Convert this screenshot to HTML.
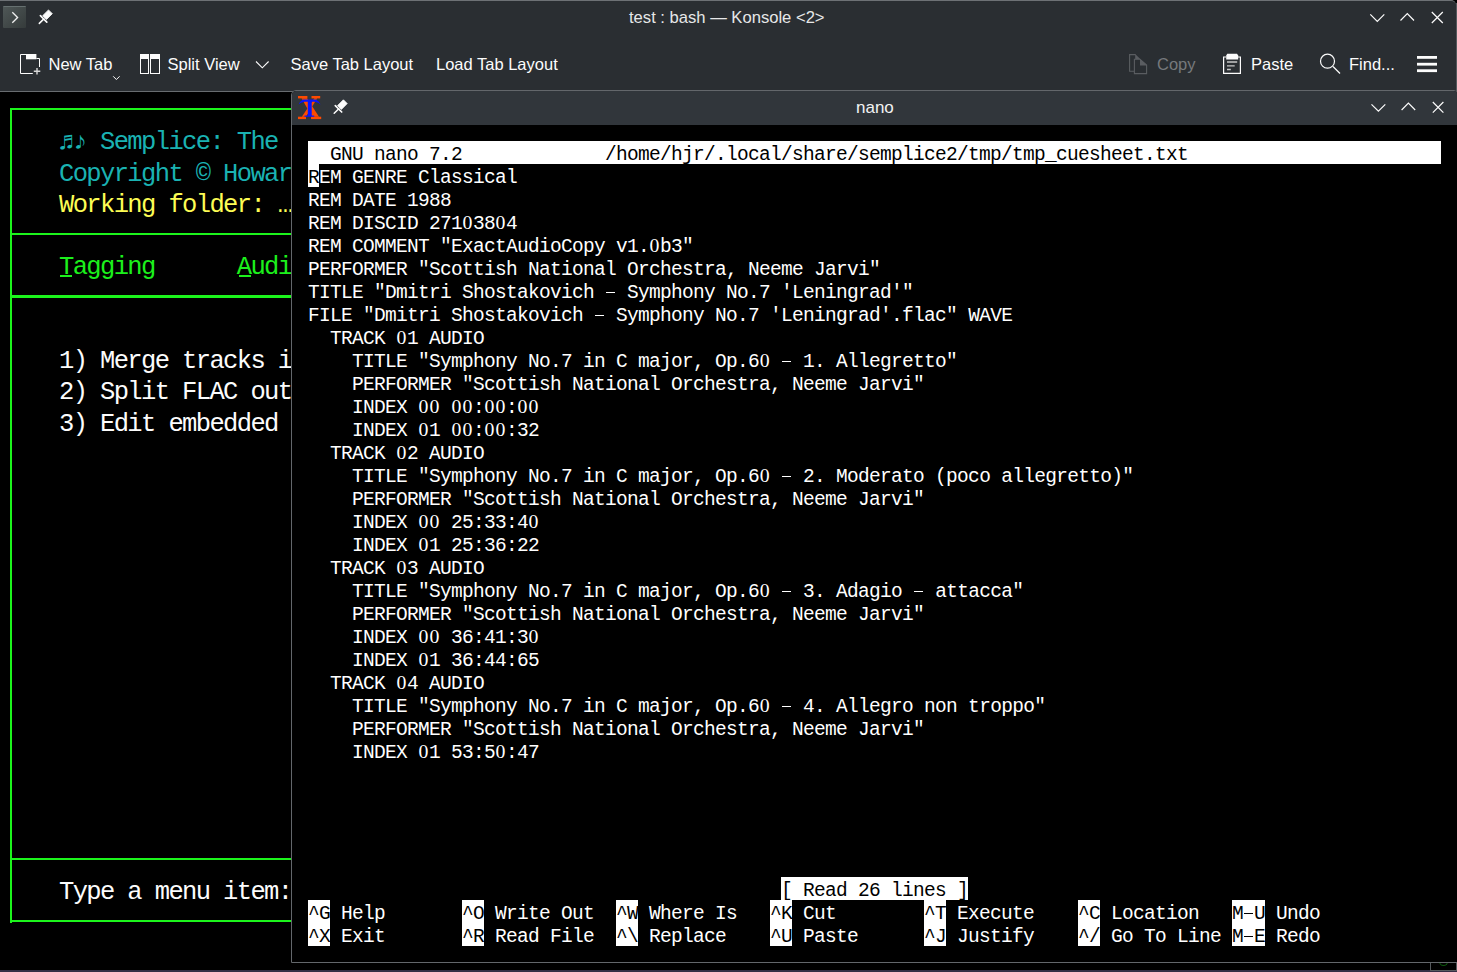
<!DOCTYPE html>
<html><head><meta charset="utf-8">
<style>
*{margin:0;padding:0;box-sizing:border-box}
html,body{width:1457px;height:972px;overflow:hidden;background:#000}
body{position:relative;font-family:"Liberation Sans",sans-serif}
.abs{position:absolute}
#desk{left:0;top:970px;width:1457px;height:2px;background:#352e45}
#ktitle{left:0;top:0;width:1456px;height:92px;background:#2a2e32;border-top:1px solid #6d7175;border-top-right-radius:5px;border-top-left-radius:0}
#ksep{left:0;top:91px;width:1457px;height:1px;background:#686c70}
.ttl{position:absolute;color:#fcfcfc;font-size:16px;white-space:pre;line-height:20px}
.tb{position:absolute;color:#fcfcfc;font-size:16.5px;white-space:pre;line-height:20px;top:54.4px}
.kl{position:absolute;font-family:"Liberation Mono",monospace;font-size:25.5px;letter-spacing:-1.63px;white-space:pre;line-height:31.25px;padding-top:3px}
.g{background:#1cf41c;position:absolute}
#nano{left:291px;top:90px;width:1167px;border-top-right-radius:4px;height:873px;border:1px solid #63676b;border-top-left-radius:5px;background:#000;overflow:hidden}
#ntitle{left:0;top:0;width:1170px;height:34px;background:#31363b}
.nl{position:absolute;height:23px;font-family:"Liberation Mono",monospace;font-size:19.5px;letter-spacing:-0.7px;line-height:23px;white-space:pre;color:#fff;padding-top:2.5px}
.rb{position:absolute;height:23px}
.hy{display:inline-block;width:9px;height:1.3px;margin:0 1px;background:currentColor;vertical-align:4.6px}
.z{font-family:"Liberation Serif",serif;display:inline-block;width:11px;text-align:center;letter-spacing:0;font-size:19.8px;line-height:12px}
svg{position:absolute;overflow:visible}
</style></head><body>
<div id="desk" class="abs"></div>
<div class="abs" style="left:1456px;top:3px;width:1px;height:967px;background:#55595d"></div>
<div class="abs" style="left:1430px;top:962px;width:27px;height:8.5px;border:1px solid #55595d;border-top:none"></div>
<div class="abs" style="left:1439px;top:960px;width:9px;height:6px;border:1.3px solid #0c5a0c;border-top:none;border-radius:0 0 5px 5px"></div>
<div id="ktitle" class="abs"></div>
<div id="ksep" class="abs"></div>
<!-- konsole title -->
<div class="ttl" style="left:629px;top:8.2px;font-size:16.6px;color:#e6e7e8">test : bash — Konsole &lt;2&gt;</div>
<div class="abs" style="left:3px;top:6px;width:23px;height:22px;background:linear-gradient(135deg,#4f5757,#353b3b);border-top:1px solid #667070;border-radius:1px"></div>
<svg style="left:0;top:0" width="1457" height="92" viewBox="0 0 1457 92">
 <g fill="none" stroke="#f0f0f0" stroke-width="1.3">
  <path d="M12.3 12.3 L17.6 17.5 L12.3 22.8"/>
 </g>
 <!-- pin -->
 <g fill="#fcfcfc" stroke="#fcfcfc" transform="translate(-294.9 -89.9)">
    <path d="M343.4 99.8 L347.2 103.6 L341.4 109.4 L337.6 105.6 Z" stroke-width="0.8" stroke-linejoin="round"/>
    <path d="M335.3 105.6 L341.7 112" stroke-width="1.7" stroke-linecap="round"/>
    <path d="M338.8 108.8 L334.2 113.3" stroke-width="1.5" stroke-linecap="round"/>
 </g>
 <!-- window buttons -->
 <g fill="none" stroke="#fcfcfc" stroke-width="1.2">
  <path d="M1370.3 14.3 L1377.3 21.3 L1384.3 14.3"/>
  <path d="M1400.5 20.5 L1407.3 13.6 L1414 20.5"/>
  <path d="M1431.8 12 L1442.8 23 M1442.8 12 L1431.8 23"/>
 </g>
 <!-- new tab icon -->
 <g fill="none" stroke="#fcfcfc" stroke-width="1">
  <path d="M26 54.5 H20.5 V73.5 H32.8"/>
  <path d="M36.4 58.5 H39.5 V67"/>
  <path d="M37 68 V74.5 M33.8 71.3 H40.3" stroke="#d8d8d8" stroke-width="1.4"/>
 </g>
 <path d="M26 54 H36.4 V59.3 H26 Z" fill="#fcfcfc"/>
 <path d="M113.2 76.3 L116.4 79.5 L119.6 76.3" fill="none" stroke="#fcfcfc" stroke-width="1"/>
 <!-- split view -->
 <g fill="none" stroke="#fcfcfc" stroke-width="1">
  <rect x="140.5" y="54.5" width="8" height="19"/>
  <rect x="150.5" y="54.5" width="9" height="19"/>
 </g>
 <rect x="140" y="54" width="9" height="5" fill="#fcfcfc"/>
 <rect x="150" y="54" width="10" height="5" fill="#fcfcfc"/>
 <path d="M256 61.5 L262.3 67.8 L268.6 61.5" fill="none" stroke="#fcfcfc" stroke-width="1.1"/>
 <!-- copy icon (disabled) -->
 <g fill="none" stroke="#5a5d61" stroke-width="1.1">
  <path d="M1134 71.3 H1129.6 V54.6 H1135.6"/>
  <path d="M1134.4 59.3 H1140 L1146.6 65 V73.6 H1134.4 Z"/>
 </g>
 <path d="M1135.2 54 L1140.5 59.2 H1135.2 Z" fill="#5a5d61"/>
 <path d="M1140 59 L1147.2 65.5 H1140 Z" fill="#5a5d61"/>
 <!-- paste icon -->
 <g fill="none" stroke="#fcfcfc" stroke-width="1.2">
  <path d="M1226 57 H1223.6 V73.4 H1240.4 V57 H1238"/>
 </g>
 <path d="M1227.3 53.8 H1237 L1238.2 55.5 V59.6 H1226.2 V55.5 Z" fill="#fcfcfc"/>
 <g stroke="#c8c8c8" stroke-width="1.4">
  <path d="M1227 62 H1237.2 M1227 65.9 H1234.7 M1227 69.5 H1230.8"/>
 </g>
 <!-- find -->
 <g fill="none" stroke="#fcfcfc" stroke-width="1.2">
  <circle cx="1327.5" cy="61.2" r="7"/>
  <path d="M1333 66.5 L1340 73.5"/>
 </g>
 <!-- hamburger -->
 <g fill="#fcfcfc">
  <rect x="1417" y="56" width="20" height="2.8"/>
  <rect x="1417" y="62.8" width="20" height="2.8"/>
  <rect x="1417" y="69.3" width="20" height="2.8"/>
 </g>
</svg>
<div class="tb" style="left:48.5px">New Tab</div>
<div class="tb" style="left:167.5px">Split View</div>
<div class="tb" style="left:290.5px">Save Tab Layout</div>
<div class="tb" style="left:436px">Load Tab Layout</div>
<div class="tb" style="left:1157px;color:#76797c">Copy</div>
<div class="tb" style="left:1251px">Paste</div>
<div class="tb" style="left:1349px">Find...</div>
<!-- konsole terminal -->
<div class="abs" style="left:0;top:92px;width:292px;height:878px;overflow:hidden">
  <div class="g" style="left:10px;top:15.5px;width:300px;height:2.7px"></div>
  <div class="g" style="left:10px;top:140.8px;width:300px;height:2.7px"></div>
  <div class="g" style="left:10px;top:203px;width:300px;height:2.7px"></div>
  <div class="g" style="left:10px;top:765.8px;width:300px;height:2.7px"></div>
  <div class="g" style="left:10px;top:827.8px;width:300px;height:2.7px"></div>
  <div class="g" style="left:9.6px;top:15.5px;width:2.6px;height:815px"></div>
  <div style="position:absolute;left:-0px;top:-92px">
<div class="abs" style="left:59.5px;top:275.2px;width:12.5px;height:1.4px;background:#1cf01c"></div>
<div class="abs" style="left:238.5px;top:275.2px;width:12.5px;height:1.4px;background:#1cf01c"></div>
<div class="kl" style="left:59.00px;top:124.35px;color:#1ab2b2">♬♪ Semplice: The Audio Tagger</div>
<div class="kl" style="left:59.00px;top:155.60px;color:#1ab2b2">Copyright © Howard Rogers</div>
<div class="kl" style="left:59.00px;top:186.85px;color:#fcfc54">Working folder: …</div>
<div class="kl" style="left:59.00px;top:249.35px;color:#1cf01c">Tagging      Audio</div>
<div class="kl" style="left:59.00px;top:343.10px;color:#fcfcfc">1) Merge tracks into</div>
<div class="kl" style="left:59.00px;top:374.35px;color:#fcfcfc">2) Split FLAC out</div>
<div class="kl" style="left:59.00px;top:405.60px;color:#fcfcfc">3) Edit embedded cue</div>
<div class="kl" style="left:59.00px;top:874.35px;color:#fcfcfc">Type a menu item: </div>

  </div>
</div>
<div id="nano" class="abs">
  <div id="ntitle" class="abs"></div>
  <div class="ttl" style="left:564px;top:6.5px;font-size:17px;color:#f2f2f2">nano</div>
  <svg style="left:-292px;top:-91px" width="1457" height="130" viewBox="0 0 1457 130">
   <!-- X icon -->
   <g fill="#ff4a00">
    <rect x="298" y="96" width="9.4" height="2.4"/>
    <rect x="311.5" y="96" width="8.7" height="2.4"/>
    <rect x="298" y="116.7" width="8" height="2.4"/>
    <rect x="311" y="116.7" width="10.2" height="2.4"/>
    <path d="M301.6 98.3 H307 L319 116.8 H312 Z"/>
    <path d="M314.4 98.3 H317.2 L306 116.8 H301.8 Z"/>
   </g>
   <path d="M298.5 104.6 Q300 100.6 303 99.4 H316 Q319 100.6 320.6 104.6 Q318.5 102.4 314.5 101.8 H311.7 V115.4 H314.2 V116.7 H304.5 V115.4 H307.8 V101.8 H304.6 Q300.6 102.4 298.5 104.6 Z" fill="#0a14ff"/>
   <g fill="#fcfcfc" stroke="#fcfcfc">
    <path d="M343.4 99.8 L347.2 103.6 L341.4 109.4 L337.6 105.6 Z" stroke-width="0.8" stroke-linejoin="round"/>
    <path d="M335.3 105.6 L341.7 112" stroke-width="1.7" stroke-linecap="round"/>
    <path d="M338.8 108.8 L334.2 113.3" stroke-width="1.5" stroke-linecap="round"/>
   </g>
   <g fill="none" stroke="#fcfcfc" stroke-width="1.2">
    <path d="M1371.5 104.3 L1378.4 111.2 L1385.3 104.3"/>
    <path d="M1401.6 110 L1408.4 103.2 L1415.2 110"/>
    <path d="M1432.8 102 L1443.4 112.6 M1443.4 102 L1432.8 112.6"/>
   </g>
  </svg>
</div>
<div class="rb" style="left:308px;top:141px;width:1133px;background:#fff"></div>
<div class="nl" style="left:330px;top:141px;color:#000">GNU nano 7.2</div>
<div class="nl" style="left:605px;top:141px;color:#000">/home/hjr/.local/share/semplice2/tmp/tmp_cuesheet.txt</div>
<div class="rb" style="left:308px;top:164px;width:11px;background:#fff"></div>
<div class="nl" style="left:308px;top:164px;color:#000">R</div>
<div class="nl" style="left:319px;top:164px;color:#fff">EM GENRE Classical</div>
<div class="nl" style="left:308px;top:187px;color:#fff">REM DATE 1988</div>
<div class="nl" style="left:308px;top:210px;color:#fff">REM DISCID 271<span class="z">0</span>38<span class="z">0</span>4</div>
<div class="nl" style="left:308px;top:233px;color:#fff">REM COMMENT &quot;ExactAudioCopy v1.<span class="z">0</span>b3&quot;</div>
<div class="nl" style="left:308px;top:256px;color:#fff">PERFORMER &quot;Scottish National Orchestra, Neeme Jarvi&quot;</div>
<div class="nl" style="left:308px;top:279px;color:#fff">TITLE &quot;Dmitri Shostakovich <span class="hy"></span> Symphony No.7 &#x27;Leningrad&#x27;&quot;</div>
<div class="nl" style="left:308px;top:302px;color:#fff">FILE &quot;Dmitri Shostakovich <span class="hy"></span> Symphony No.7 &#x27;Leningrad&#x27;.flac&quot; WAVE</div>
<div class="nl" style="left:330px;top:325px;color:#fff">TRACK <span class="z">0</span>1 AUDIO</div>
<div class="nl" style="left:352px;top:348px;color:#fff">TITLE &quot;Symphony No.7 in C major, Op.6<span class="z">0</span> <span class="hy"></span> 1. Allegretto&quot;</div>
<div class="nl" style="left:352px;top:371px;color:#fff">PERFORMER &quot;Scottish National Orchestra, Neeme Jarvi&quot;</div>
<div class="nl" style="left:352px;top:394px;color:#fff">INDEX <span class="z">0</span><span class="z">0</span> <span class="z">0</span><span class="z">0</span>:<span class="z">0</span><span class="z">0</span>:<span class="z">0</span><span class="z">0</span></div>
<div class="nl" style="left:352px;top:417px;color:#fff">INDEX <span class="z">0</span>1 <span class="z">0</span><span class="z">0</span>:<span class="z">0</span><span class="z">0</span>:32</div>
<div class="nl" style="left:330px;top:440px;color:#fff">TRACK <span class="z">0</span>2 AUDIO</div>
<div class="nl" style="left:352px;top:463px;color:#fff">TITLE &quot;Symphony No.7 in C major, Op.6<span class="z">0</span> <span class="hy"></span> 2. Moderato (poco allegretto)&quot;</div>
<div class="nl" style="left:352px;top:486px;color:#fff">PERFORMER &quot;Scottish National Orchestra, Neeme Jarvi&quot;</div>
<div class="nl" style="left:352px;top:509px;color:#fff">INDEX <span class="z">0</span><span class="z">0</span> 25:33:4<span class="z">0</span></div>
<div class="nl" style="left:352px;top:532px;color:#fff">INDEX <span class="z">0</span>1 25:36:22</div>
<div class="nl" style="left:330px;top:555px;color:#fff">TRACK <span class="z">0</span>3 AUDIO</div>
<div class="nl" style="left:352px;top:578px;color:#fff">TITLE &quot;Symphony No.7 in C major, Op.6<span class="z">0</span> <span class="hy"></span> 3. Adagio <span class="hy"></span> attacca&quot;</div>
<div class="nl" style="left:352px;top:601px;color:#fff">PERFORMER &quot;Scottish National Orchestra, Neeme Jarvi&quot;</div>
<div class="nl" style="left:352px;top:624px;color:#fff">INDEX <span class="z">0</span><span class="z">0</span> 36:41:3<span class="z">0</span></div>
<div class="nl" style="left:352px;top:647px;color:#fff">INDEX <span class="z">0</span>1 36:44:65</div>
<div class="nl" style="left:330px;top:670px;color:#fff">TRACK <span class="z">0</span>4 AUDIO</div>
<div class="nl" style="left:352px;top:693px;color:#fff">TITLE &quot;Symphony No.7 in C major, Op.6<span class="z">0</span> <span class="hy"></span> 4. Allegro non troppo&quot;</div>
<div class="nl" style="left:352px;top:716px;color:#fff">PERFORMER &quot;Scottish National Orchestra, Neeme Jarvi&quot;</div>
<div class="nl" style="left:352px;top:739px;color:#fff">INDEX <span class="z">0</span>1 53:5<span class="z">0</span>:47</div>
<div class="rb" style="left:781px;top:877px;width:187px;background:#fff"></div>
<div class="nl" style="left:781px;top:877px;color:#000">[ Read 26 lines ]</div>
<div class="rb" style="left:308px;top:900px;width:22px;background:#fff"></div>
<div class="nl" style="left:308px;top:900px;color:#000">^G</div>
<div class="nl" style="left:341px;top:900px;color:#fff">Help</div>
<div class="rb" style="left:462px;top:900px;width:22px;background:#fff"></div>
<div class="nl" style="left:462px;top:900px;color:#000">^O</div>
<div class="nl" style="left:495px;top:900px;color:#fff">Write Out</div>
<div class="rb" style="left:616px;top:900px;width:22px;background:#fff"></div>
<div class="nl" style="left:616px;top:900px;color:#000">^W</div>
<div class="nl" style="left:649px;top:900px;color:#fff">Where Is</div>
<div class="rb" style="left:770px;top:900px;width:22px;background:#fff"></div>
<div class="nl" style="left:770px;top:900px;color:#000">^K</div>
<div class="nl" style="left:803px;top:900px;color:#fff">Cut</div>
<div class="rb" style="left:924px;top:900px;width:22px;background:#fff"></div>
<div class="nl" style="left:924px;top:900px;color:#000">^T</div>
<div class="nl" style="left:957px;top:900px;color:#fff">Execute</div>
<div class="rb" style="left:1078px;top:900px;width:22px;background:#fff"></div>
<div class="nl" style="left:1078px;top:900px;color:#000">^C</div>
<div class="nl" style="left:1111px;top:900px;color:#fff">Location</div>
<div class="rb" style="left:1232px;top:900px;width:33px;background:#fff"></div>
<div class="nl" style="left:1232px;top:900px;color:#000">M<span class="hy"></span>U</div>
<div class="nl" style="left:1276px;top:900px;color:#fff">Undo</div>
<div class="rb" style="left:308px;top:923px;width:22px;background:#fff"></div>
<div class="nl" style="left:308px;top:923px;color:#000">^X</div>
<div class="nl" style="left:341px;top:923px;color:#fff">Exit</div>
<div class="rb" style="left:462px;top:923px;width:22px;background:#fff"></div>
<div class="nl" style="left:462px;top:923px;color:#000">^R</div>
<div class="nl" style="left:495px;top:923px;color:#fff">Read File</div>
<div class="rb" style="left:616px;top:923px;width:22px;background:#fff"></div>
<div class="nl" style="left:616px;top:923px;color:#000">^\</div>
<div class="nl" style="left:649px;top:923px;color:#fff">Replace</div>
<div class="rb" style="left:770px;top:923px;width:22px;background:#fff"></div>
<div class="nl" style="left:770px;top:923px;color:#000">^U</div>
<div class="nl" style="left:803px;top:923px;color:#fff">Paste</div>
<div class="rb" style="left:924px;top:923px;width:22px;background:#fff"></div>
<div class="nl" style="left:924px;top:923px;color:#000">^J</div>
<div class="nl" style="left:957px;top:923px;color:#fff">Justify</div>
<div class="rb" style="left:1078px;top:923px;width:22px;background:#fff"></div>
<div class="nl" style="left:1078px;top:923px;color:#000">^/</div>
<div class="nl" style="left:1111px;top:923px;color:#fff">Go To Line</div>
<div class="rb" style="left:1232px;top:923px;width:33px;background:#fff"></div>
<div class="nl" style="left:1232px;top:923px;color:#000">M<span class="hy"></span>E</div>
<div class="nl" style="left:1276px;top:923px;color:#fff">Redo</div>

</body></html>
